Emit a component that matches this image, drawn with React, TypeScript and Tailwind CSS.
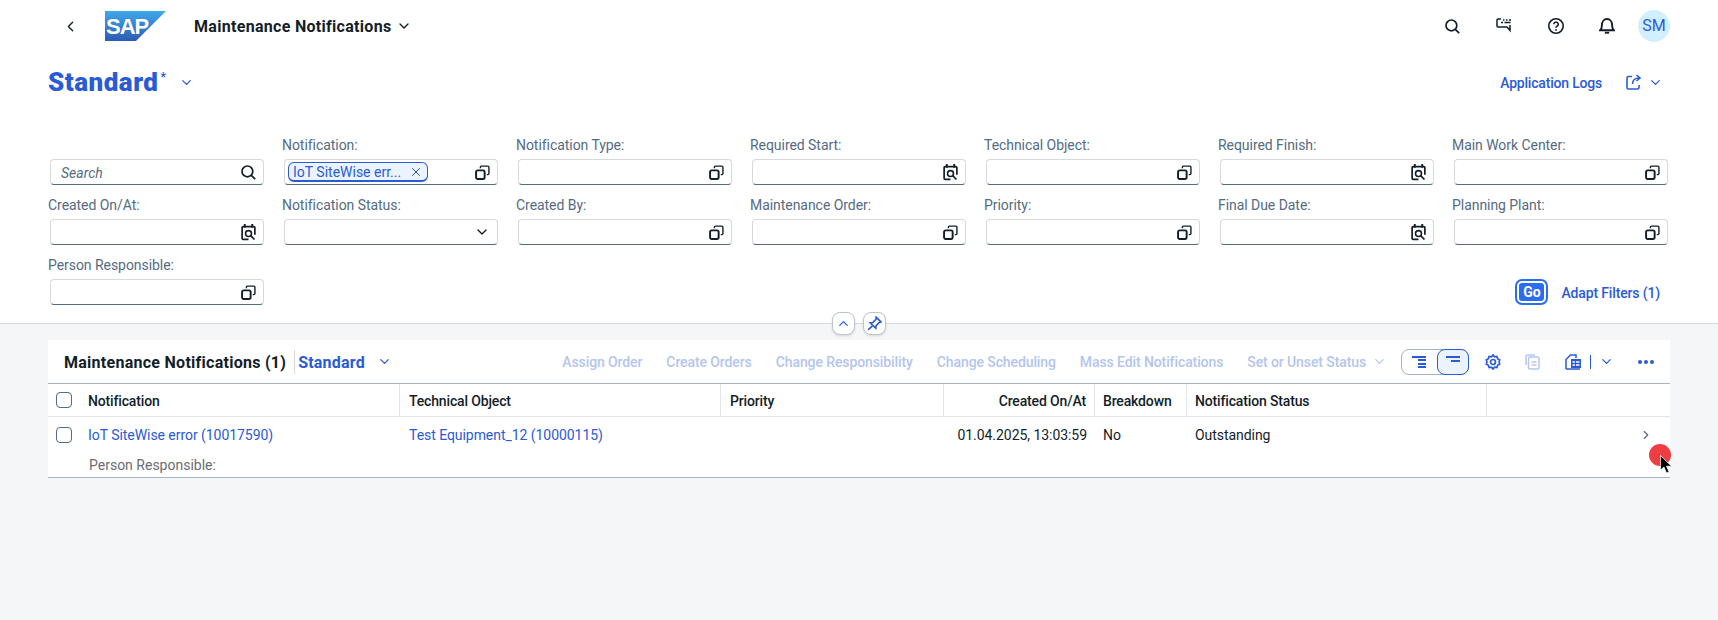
import { ChevronDown, ChevronLeft, ChevronRight, ChevronUp, X } from "lucide-react";
import type { ReactNode } from "react";

const BLUE = "#2a5bd7";

const ValueHelpIcon = () => (
  <svg width="15" height="15" viewBox="0 0 14 14" fill="none" stroke="#131e29">
    <rect x="1" y="5" width="8" height="8" rx="1.5" strokeWidth="1.8" />
    <path d="M5 3V2a1 1 0 0 1 1-1h6a1 1 0 0 1 1 1v6a1 1 0 0 1-1 1h-1" strokeWidth="1.3" />
  </svg>
);

const CalendarSearchIcon = () => (
  <svg width="15" height="17" viewBox="0 0 14 16" fill="none" stroke="#131e29">
    <path d="M3.5 0v3.500M10.500 0v3.500" strokeWidth="1.8" />
    <path d="M1 8V3.500a1 1 0 0 1 1-1h10a1 1 0 0 1 1 1V8M1 8v5.500a1 1 0 0 0 1 1h5M13 8v2" strokeWidth="1.6" />
    <circle cx="7" cy="9" r="2.800" strokeWidth="1.500" />
    <path d="M9 11l3.600 3.600" strokeWidth="1.600" />
  </svg>
);

const SearchIcon = () => (
  <svg width="15" height="15" viewBox="0 0 15 15" fill="none" stroke="#131e29" strokeWidth="1.7">
    <circle cx="6.400" cy="6.400" r="5.400" />
    <path d="M10.300 10.300L14.200 14.200" />
  </svg>
);

const FeedbackIcon = () => (
  <svg width="16" height="17" viewBox="0 0 16 17" fill="none" stroke="#131e29" strokeWidth="1.500">
    <path d="M5 1H2a1 1 0 0 0-1 1v6a1 1 0 0 0 1 1h9l3 3.500V7" />
    <path d="M7 2h1.500M10 2h1.500M13 2h2M5 4.500h2M8.500 4.500h6" strokeWidth="1.400" />
  </svg>
);

const HelpIcon = () => (
  <svg width="16" height="16" viewBox="0 0 16 16" fill="none" stroke="#131e29" strokeWidth="1.600">
    <circle cx="8" cy="8" r="7.200" />
    <path d="M5.800 6.200a2.200 2.200 0 1 1 3.400 1.900c-.8.500-1.200.9-1.200 1.700" />
    <circle cx="8" cy="11.900" r=".9" fill="#131e29" stroke="none" />
  </svg>
);

const BellIcon = () => (
  <svg width="16" height="16" viewBox="0 0 15 15" fill="#131e29" stroke="#131e29" strokeWidth="1.800">
    <path d="M1 11.500c1.300-1 1.700-2 1.700-4.500C2.700 3.500 4.700 1 7.500 1s4.800 2.500 4.800 6c0 2.500.4 3.500 1.700 4.500z" fill="none" />
    <path d="M5.500 13.800h4" strokeWidth="1.800" />
  </svg>
);

const ShareIcon = () => (
  <svg width="16" height="16" viewBox="0 0 16 16" fill="none" stroke={BLUE} strokeWidth="1.600">
    <path d="M6 2.500H2.500a1.500 1.500 0 0 0-1.500 1.500v9.500a1.500 1.500 0 0 0 1.500 1.500h9a1.500 1.500 0 0 0 1.500-1.500V11" />
    <path d="M6.500 10c0-3.500 2.500-6 6.500-6M10.500 1l3.500 3-3.500 3" />
  </svg>
);

const GearIcon = () => (
  <svg width="16" height="16" viewBox="0 0 16 16" fill="none" stroke={BLUE} strokeWidth="1.700">
    <path d="M8 1l1.500 1.800 2.400-.3.700 2.300 2.100 1.200L14 8l.700 2-2.100 1.200-.7 2.300-2.400-.3L8 15l-1.500-1.800-2.400.3-.7-2.300L1.300 10 2 8l-.7-2 2.100-1.200.7-2.300 2.400.3z" />
    <circle cx="8" cy="8" r="2.500" />
  </svg>
);

const CopyIcon = () => (
  <svg width="15" height="16" viewBox="0 0 15 16" fill="none" stroke="#b4c5ee" strokeWidth="1.500">
    <rect x="3.500" y="3" width="10.500" height="12" rx="1.500" />
    <path d="M1 11V2a1 1 0 0 1 1-1h8M6.500 8h5M6.500 11h5" />
  </svg>
);

const ExportIcon = () => (
  <svg width="16" height="16" viewBox="0 0 16 16" fill="none">
    <path d="M1 15V5.500L5.500 1H11v3" stroke={BLUE} strokeWidth="1.500" />
    <path d="M1 15h14" stroke={BLUE} strokeWidth="1.500" />
    <path d="M6 5h10v9H6z" fill={BLUE} />
    <path d="M7.500 8h2.500M11 8h3.500M7.500 11h2.500M11 11h3.500" stroke="#fff" strokeWidth="1.500" />
  </svg>
);

const PinIcon = () => (
  <svg width="15" height="15" viewBox="0 0 14 14" fill="none" stroke={BLUE} strokeWidth="1.500">
    <path d="M8.500 1L13 5.500l-1.500.5-3 3-.3 2.500L3 6.300l2.500-.3 3-3z" />
    <path d="M5 9.200L1 13" />
  </svg>
);

const SapLogo = () => (
  <svg width="62" height="30" viewBox="0 0 62 30">
    <defs>
      <linearGradient id="sap" x1="0" y1="0" x2="0" y2="1">
        <stop offset="0" stopColor="#3fa9ec" />
        <stop offset="1" stopColor="#2d5bb5" />
      </linearGradient>
    </defs>
    <path d="M0 0h61L31 30H0z" fill="url(#sap)" />
    <text x="1" y="23" fill="#fff" fontSize="22" fontWeight="700" fontFamily="'Liberation Sans', sans-serif" letterSpacing="-1">
      SAP
    </text>
  </svg>
);

const Field = ({ label, children }: { label?: string; children: ReactNode }) => (
  <div>
    <div className="h-6 text-[14px] leading-[21px] tracking-[-0.05px] text-[#556b82]">{label}</div>
    <div className="ml-[2px] flex h-[26px] w-[214px] items-center justify-end rounded-[4px] border border-[#d5dadd] border-b-[#556b82] bg-white pr-[7px]">
      {children}
    </div>
  </div>
);

const ValueField = ({ label }: { label: string }) => (
  <Field label={label}>
    <ValueHelpIcon />
  </Field>
);

const DateField = ({ label }: { label: string }) => (
  <Field label={label}>
    <CalendarSearchIcon />
  </Field>
);

const Checkbox = () => <div className="h-4 w-4 rounded-[4px] border border-[#556b82] bg-white" />;

const actions = ["Assign Order", "Create Orders", "Change Responsibility", "Change Scheduling", "Mass Edit Notifications"];

const columns = [
  { title: "Technical Object", cls: "w-[321px] pl-[9px]" },
  { title: "Priority", cls: "w-[223px] pl-[9px]" },
  { title: "Created On/At", cls: "w-[151px] justify-end pr-[8px]" },
  { title: "Breakdown", cls: "w-[92px] pl-[8px]" },
  { title: "Notification Status", cls: "w-[300px] pl-[8px]" },
];

export default function App() {
  return (
    <div className="relative flex h-[620px] flex-col overflow-hidden bg-[#f5f6f7] font-['Roboto',sans-serif] text-[14px] text-[#131e29]">
      <section className="relative border-b border-[#d5dadd] bg-white">
        <header className="flex h-[52px] items-center pl-[62px] pr-[48px]">
          <ChevronLeft size={17} strokeWidth={2} />
          <div className="ml-[26px] mt-[-1px]">
            <SapLogo />
          </div>
          <span className="ml-[27px] pt-[2px] text-[16px] font-bold tracking-[0.3px]">Maintenance Notifications</span>
          <ChevronDown size={16} strokeWidth={2} className="ml-[5px]" />
          <div className="ml-auto flex items-center">
            <SearchIcon />
            <div className="ml-[36px]">
              <FeedbackIcon />
            </div>
            <div className="ml-[36px]">
              <HelpIcon />
            </div>
            <div className="ml-[35px]">
              <BellIcon />
            </div>
            <div className="ml-[23px] flex h-8 w-8 items-center justify-center rounded-full bg-[#d1efff] text-[16px] text-[#2a5bd7]">SM</div>
          </div>
        </header>

        <div className="flex h-[60px] items-center pl-[48px] pr-[55px] text-[#2a5bd7]">
          <span className="text-[26px] font-black leading-none tracking-[0.5px]">Standard</span>
          <span className="mb-[10px] ml-[2px] text-[12px] font-bold leading-none">*</span>
          <ChevronDown size={15} strokeWidth={2} className="ml-[13px]" />
          <span className="ml-auto pt-[2px] text-[14px] font-medium tracking-[-0.2px]">Application Logs</span>
          <div className="ml-[24px]">
            <ShareIcon />
          </div>
          <ChevronDown size={15} strokeWidth={2} className="ml-[6px]" />
        </div>

        <div className="grid grid-cols-[repeat(7,216px)] gap-x-[18px] gap-y-[10px] pb-[18px] pl-[48px] pt-[23px]">
          <Field>
            <span className="mr-auto pl-[10px] pt-[2px] text-[14px] italic text-[#556b82]">Search</span>
            <SearchIcon />
          </Field>
          <Field label="Notification:">
            <div className="mr-auto ml-[3px] flex h-[20px] w-[140px] items-center justify-between rounded-[6px] border border-b-2 border-[#2a5bd7] bg-[#ebf3ff] px-[4px] text-[14px] leading-none text-[#2a5bd7]">
              <span className="pt-[1px]">IoT SiteWise err...</span>
              <X size={14} strokeWidth={1.6} className="text-[#1b3f8f]" />
            </div>
            <ValueHelpIcon />
          </Field>
          <ValueField label="Notification Type:" />
          <DateField label="Required Start:" />
          <ValueField label="Technical Object:" />
          <DateField label="Required Finish:" />
          <ValueField label="Main Work Center:" />
          <DateField label="Created On/At:" />
          <Field label="Notification Status:">
            <ChevronDown size={16} strokeWidth={2} />
          </Field>
          <ValueField label="Created By:" />
          <ValueField label="Maintenance Order:" />
          <ValueField label="Priority:" />
          <DateField label="Final Due Date:" />
          <ValueField label="Planning Plant:" />
          <ValueField label="Person Responsible:" />
          <div className="col-span-6 flex items-end justify-end pr-[8px]">
            <div className="flex h-[26px] w-[33px] items-center justify-center rounded-[7px] border-2 border-[#2a6df0] bg-white">
              <span className="flex h-[18px] w-[25px] items-center justify-center rounded-[3px] bg-[#2a6df0] text-[14px] font-bold text-white">Go</span>
            </div>
            <span className="ml-[13px] flex h-[26px] items-center pt-[2px] text-[14px] font-medium tracking-[-0.15px] text-[#2a5bd7]">Adapt Filters (1)</span>
          </div>
        </div>

        <div className="absolute bottom-[-12px] left-1/2 flex -translate-x-1/2 gap-2">
          <div className="flex h-[23px] w-[23px] items-center justify-center rounded-[8px] border border-[#bcc3ca] bg-white shadow-sm">
            <ChevronUp size={15} strokeWidth={2} color={BLUE} />
          </div>
          <div className="flex h-[23px] w-[23px] items-center justify-center rounded-[8px] border border-[#bcc3ca] bg-white shadow-sm">
            <PinIcon />
          </div>
        </div>
      </section>

      <section className="mx-[48px] mt-[16px] bg-white">
        <div className="flex h-[44px] items-center border-b border-[#a9b4be] pl-[16px]">
          <span className="pt-[2px] text-[16px] font-bold tracking-[0.27px]">Maintenance Notifications (1)</span>
          <span className="ml-[8px] h-[24px] w-px bg-[#d5dadd]" />
          <span className="ml-[3px] pt-[2px] text-[16px] font-bold tracking-[0.2px] text-[#2a5bd7]">Standard</span>
          <ChevronDown size={15} strokeWidth={2} color={BLUE} className="ml-[12px]" />
          <div className="ml-auto flex items-center gap-[24px] font-medium tracking-[-0.1px] text-[#b4c5ee]">
            {actions.map((action) => (
              <span key={action} className="pt-[2px]">
                {action}
              </span>
            ))}
            <span className="flex items-center gap-[6px]">
              <span className="pt-[2px]">Set or Unset Status</span>
              <ChevronDown size={15} strokeWidth={2} />
            </span>
          </div>
          <div className="ml-[14px] flex h-[26px] w-[68px] rounded-[8px] border border-[#a9b4be]">
            <div className="flex w-[35px] flex-col items-end gap-[1.5px] pr-[11px] pt-[6px]">
              <span className="h-[2px] w-[14px] bg-[#2a5bd7]" />
              <span className="h-[2px] w-[8px] bg-[#2a5bd7]" />
              <span className="h-[2px] w-[8px] bg-[#2a5bd7]" />
              <span className="h-[2px] w-[8px] bg-[#2a5bd7]" />
            </div>
            <div className="-my-px -mr-px flex flex-1 flex-col items-end gap-[2px] rounded-[8px] border border-[#2a5bd7] bg-[#ebf3ff] pr-[8px] pt-[6px]">
              <span className="h-[2px] w-[14px] bg-[#2a5bd7]" />
              <span className="h-[2px] w-[9px] bg-[#2a5bd7]" />
            </div>
          </div>
          <div className="ml-[16px]">
            <GearIcon />
          </div>
          <div className="ml-[24px]">
            <CopyIcon />
          </div>
          <div className="ml-[25px]">
            <ExportIcon />
          </div>
          <span className="ml-[9px] h-[14px] w-px bg-[#2a5bd7]" />
          <ChevronDown size={15} strokeWidth={2} color={BLUE} className="ml-[8px]" />
          <div className="ml-[24px] mr-[16px] flex gap-[2px]">
            <span className="h-1 w-1 rounded-full bg-[#2a5bd7]" />
            <span className="h-1 w-1 rounded-full bg-[#2a5bd7]" />
            <span className="h-1 w-1 rounded-full bg-[#2a5bd7]" />
          </div>
        </div>

        <div className="flex h-[33px] border-b border-[#e5e5e5] font-medium tracking-[-0.15px]">
          <div className="flex w-[352px] items-center border-r border-[#e5e5e5] pl-[8px]">
            <Checkbox />
            <span className="ml-[16px] pt-[2px]">Notification</span>
          </div>
          {columns.map((col) => (
            <div key={col.title} className={`flex items-center border-r border-[#e5e5e5] pt-[2px] ${col.cls}`}>
              {col.title}
            </div>
          ))}
        </div>

        <div className="h-[61px] border-b border-[#a9b4be]">
          <div className="flex h-[35px] items-center tracking-[-0.05px]">
            <div className="flex w-[352px] items-center pl-[8px]">
              <Checkbox />
              <span className="ml-[16px] pt-[2px] text-[#2a5bd7]">IoT SiteWise error (10017590)</span>
            </div>
            <span className="w-[321px] pl-[9px] pt-[2px] text-[#2a5bd7]">Test Equipment_12 (10000115)</span>
            <span className="w-[223px]" />
            <span className="w-[151px] pr-[8px] pt-[2px] text-right">01.04.2025, 13:03:59</span>
            <span className="w-[92px] pl-[8px] pt-[2px]">No</span>
            <span className="w-[300px] pl-[8px] pt-[2px]">Outstanding</span>
            <ChevronRight size={14} strokeWidth={2} color="#556b82" className="ml-auto mr-[17px]" />
          </div>
          <div className="pl-[41px] pt-[3px] text-[#6a6d70]">Person Responsible:</div>
        </div>
      </section>

      <div className="absolute left-[1649px] top-[444px] h-[22px] w-[22px] rounded-full bg-[#ef3e42]" />
      <svg className="absolute left-[1660px] top-[455px]" width="13" height="20" viewBox="0 0 13 20">
        <path d="M0.500 0.500v14.500l3.500-3 2.500 6 2.500-1-2.500-5.800h5z" fill="#000" stroke="#fff" strokeWidth="0.700" />
      </svg>
    </div>
  );
}
